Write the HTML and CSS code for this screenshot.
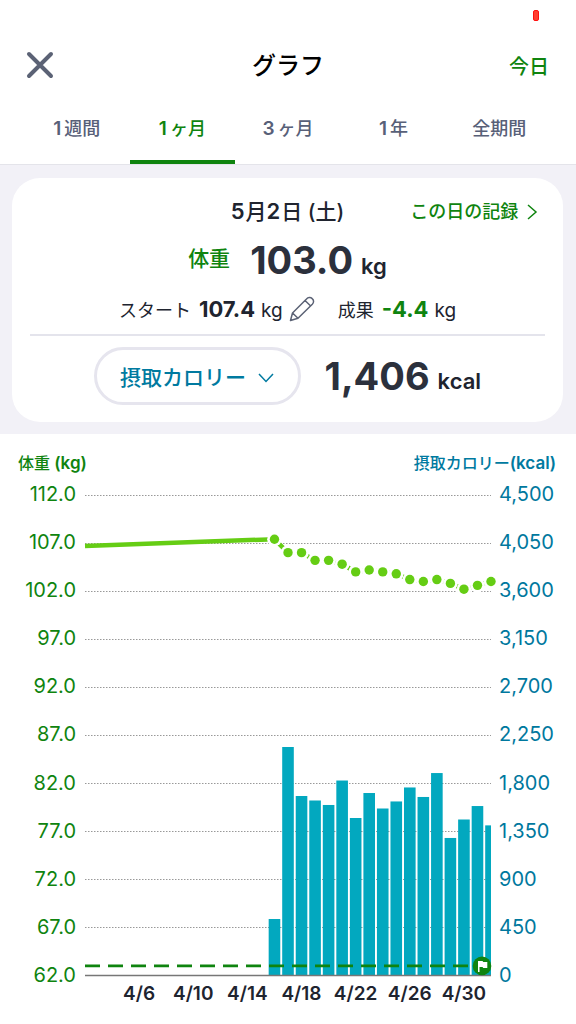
FILE: index.html
```
<!DOCTYPE html>
<html lang="ja">
<head>
    <meta charset="UTF-8">
    <meta name="viewport" content="width=device-width, initial-scale=1.0">
    <title>グラフ</title>
    <link rel="stylesheet" href="styles.css">
</head>
<body>
    <div class="statusbar"><span class="battery"></span></div>
    <header class="header">
        <button class="close" aria-label="閉じる">
            <svg width="26" height="26" viewBox="0 0 26 26"><path d="M2 2L24 24M24 2L2 24"/></svg>
        </button>
        <h1>グラフ</h1>
        <button class="today">今日</button>
    </header>
    <nav class="tabs">
        <button class="tab"><span class="n">1</span>週間</button>
        <button class="tab active"><span class="n">1</span>ヶ月</button>
        <button class="tab"><span class="n">3</span>ヶ月</button>
        <button class="tab"><span class="n">1</span>年</button>
        <button class="tab">全期間</button>
    </nav>

    <section class="summary">
        <div class="card">
            <div class="date-row">
                <h2><b>5</b>月<b>2</b>日 (土)</h2>
                <a class="record" href="#">この日の記録
                    <svg width="10" height="16" viewBox="0 0 10 16"><path d="M1 1L9 8L1 15"/></svg>
                </a>
            </div>
            <div class="weight-row">
                <span class="weight-label">体重</span>
                <span class="big">103.0</span>
                <span class="unit">kg</span>
            </div>
            <div class="start-row">
                <span>スタート</span>
                <span class="num">107.4</span>
                <span class="kg">kg</span>
                <button class="edit" aria-label="編集">
                    <svg width="26" height="26" viewBox="0 0 26 26">
                        <path d="M1.5 24.5L3.5 17L17.5 3C19 1.3 21.5 1 23.2 2.6C25 4.2 25 6.5 23.3 8.3L9 22.3ZM16 4.5L21.7 10M3.5 17L9 22.3"/>
                    </svg>
                </button>
                <span class="result">成果</span>
                <span class="num green">-4.4</span>
                <span class="kg">kg</span>
            </div>
            <div class="kcal-row">
                <button class="picker">摂取カロリー
                    <svg width="16" height="10" viewBox="0 0 16 10"><path d="M1 1L8 8.5L15 1"/></svg>
                </button>
                <span class="big">1,406</span>
                <span class="unit">kcal</span>
            </div>
        </div>
    </section>

    <main>
        <div class="axis-titles">
            <span class="green">体重 <b>(kg)</b></span>
            <span class="blue">摂取カロリー<b>(kcal)</b></span>
        </div>
        <div class="chart">
            <div class="axis left" id="weight-axis"></div>
            <svg class="plot" id="plot" viewBox="0 0 406 481"></svg>
            <div class="axis right" id="kcal-axis"></div>
            <div class="days" id="days"></div>
        </div>
    </main>
    <script src="chart.js"></script>
</body>
</html>
```
FILE: styles.css
```
* {
    box-sizing: border-box;
}
body {
    margin: 0;
    background: #fff;
    color: #20242f;
    font-family: Inter, "Noto Sans CJK JP", sans-serif;
}
button {
    padding: 0;
    border: 0;
    background: none;
    color: inherit;
    font: inherit;
}
h1, h2 {
    margin: 0;
}
svg {
    fill: none;
    overflow: visible;
}
.green {
    color: #0f840f;
}
.blue {
    color: #007aa0;
}
.statusbar {
    display: flex;
    justify-content: flex-end;
    height: 40px;
    padding: 10px 37px;
}
.battery {
    width: 6px;
    height: 11px;
    border: 1px solid #ff1010;
    border-radius: 2px;
    background: #ff4030;
}
.header {
    display: grid;
    grid-template-columns: 1fr auto 1fr;
    align-items: center;
    height: 50px;
    padding: 0 27px;
}
.header h1 {
    padding-bottom: 4px;
    color: #000;
    font-size: 24px;
    font-weight: 500;
}
.close {
    justify-self: start;
    height: 26px;
}
.close svg {
    display: block;
    stroke: #5b6275;
    stroke-width: 4;
    stroke-linecap: round;
}
.today {
    justify-self: end;
    color: #0f840f;
    font-size: 20px;
    font-weight: 500;
}
.tabs {
    display: grid;
    grid-template-columns: repeat(5, 1fr);
    height: 75px;
    padding: 0 24px;
    border-bottom: 1px solid #e4e4ea;
}
.tab {
    padding-top: 4px;
    border-bottom: 4px solid transparent;
    color: #586078;
    font-size: 18px;
    font-weight: 500;
}
.tab .n {
    margin-right: 3px;
    font-size: 19px;
    font-weight: 600;
}
.tab.active {
    border-color: #0f840f;
    color: #0f840f;
}
.summary {
    padding: 13px 13px 12px 12px;
    background: #f2f1f7;
}
.card {
    padding: 17px 18px;
    border-radius: 28px;
    background: #fff;
}
.date-row {
    display: grid;
    grid-template-columns: 1fr auto 1fr;
    align-items: center;
    height: 30px;
}
.date-row h2 {
    grid-column: 2;
    font-size: 21px;
    font-weight: 500;
}
.date-row b {
    margin-right: 1px;
    font-size: 22px;
    font-weight: 600;
}
.record {
    justify-self: end;
    margin-right: 8px;
    color: #0f840f;
    font-size: 18px;
    font-weight: 500;
    text-decoration: none;
    white-space: nowrap;
}
.record svg {
    margin-left: 4px;
    stroke: #0f840f;
    stroke-width: 1.5;
    vertical-align: -2px;
}
.weight-row, .start-row, .kcal-row {
    display: flex;
    align-items: baseline;
    justify-content: center;
}
.weight-row {
    height: 67px;
    line-height: 70px;
}
.weight-label {
    align-self: center;
    margin-right: 20px;
    color: #0f840f;
    font-size: 21px;
    font-weight: 500;
}
.big {
    color: #2b303c;
    font-size: 38px;
    font-weight: 700;
}
.unit {
    margin-left: 8px;
    font-size: 22px;
    font-weight: 600;
}
.start-row {
    height: 44px;
    border-bottom: 2px solid #e4e4ec;
    font-size: 18px;
    line-height: 34px;
}
.num {
    margin: 0 6px 0 8px;
    font-size: 22px;
    font-weight: 700;
}
.kg {
    font-size: 19px;
}
.edit {
    align-self: flex-start;
    height: 34px;
    margin: 0 23px 0 6px;
}
.edit svg {
    display: block;
    stroke: #5b6275;
    stroke-width: 1.5;
    stroke-linejoin: round;
}
.kcal-row {
    align-items: center;
    padding-top: 11px;
}
.picker {
    height: 58px;
    margin-right: 24px;
    padding: 0 24px 0 23px;
    border: 3px solid #e6e5ee;
    border-radius: 29px;
    color: #007aa0;
    font-size: 21px;
    font-weight: 500;
}
.picker svg {
    margin-left: 6px;
    stroke: #007aa0;
    stroke-width: 1.5;
    vertical-align: 2px;
}
.kcal-row .unit {
    padding-top: 9px;
}
.axis-titles {
    display: flex;
    justify-content: space-between;
    padding: 17px 20px 0 18px;
    font-size: 16px;
    font-weight: 500;
    line-height: 24px;
}
.axis-titles b {
    font-size: 17px;
    font-weight: 600;
}
.chart {
    display: grid;
    grid-template-columns: 77px 1fr 77px;
    column-gap: 8px;
    padding-top: 20px;
}
.axis {
    display: flex;
    flex-direction: column;
    justify-content: space-between;
    margin: -11px 0 -9px;
    font-size: 20px;
    line-height: 20px;
}
.left {
    padding-right: 1px;
    color: #0f840f;
    text-align: right;
}
.right {
    color: #00789e;
}
.plot {
    display: block;
    width: 100%;
}
.days {
    grid-column: 2;
    display: grid;
    grid-template-columns: repeat(7, 1fr);
    padding: 6px 0 8px 27px;
    font-size: 19px;
    font-weight: 600;
    line-height: 24px;
    text-align: center;
}
.grid {
    stroke: #999;
    stroke-dasharray: 1.5 1.5;
}
.base {
    stroke: #777;
    stroke-width: 1.5;
}
.bar {
    fill: #02a8bf;
}
.line {
    stroke: #65cd14;
    stroke-width: 4.5;
}
.halo {
    fill: #fff;
}
.dot {
    fill: #65cd14;
}
.goal {
    stroke: #0f840f;
    stroke-width: 2.7;
    stroke-dasharray: 15 8;
}
.goal-mark {
    fill: #0f840f;
}
.flag {
    fill: #fff;
}
```
FILE: chart.js
```
// 4/16 - 5/2
var weights = [107.4, 106, 106, 105.2, 105.2, 104.8, 104, 104.2, 104, 103.8, 103.2, 103, 103.2, 102.8, 102.2, 102.6, 103];
var kcals = [529, 2140, 1681, 1639, 1597, 1826, 1475, 1709, 1564, 1630, 1761, 1672, 1896, 1288, 1461, 1587, 1406];
var days = ["4/6", "4/10", "4/14", "4/18", "4/22", "4/26", "4/30"];

var width = 406, height = 480.5, firstDay = 14;
var step = width / 30;

function weightY(w) { return height - (w - 62) / 50 * height; }
function kcalY(k) { return height - k / 4500 * height; }
function dayX(i) { return (firstDay + i) * step; }

var left = "", right = "", svg = "";
for (var i = 0; i <= 10; i++) {
    left += `<span>${(112 - i * 5).toFixed(1)}</span>`;
    right += `<span>${(4500 - i * 450).toLocaleString("en-US")}</span>`;
    var y = Math.round(i * height / 10) + 0.5;
    if (i < 10) svg += `<path class="grid" d="M0 ${y}H${width}"/>`;
}

kcals.forEach((k, i) => {
    var x = dayX(i) - 5.8;
    var w = Math.min(11.6, width - x);
    svg += `<rect class="bar" x="${x}" y="${kcalY(k)}" width="${w}" height="${height - kcalY(k)}"/>`;
});
svg += `<path class="base" d="M0 ${height}H${width}"/>`;

// weight line
var points = weights.map((w, i) => `${dayX(i)},${weightY(w)}`);
svg += `<polyline class="line" points="0,${weightY(106.7)} ${points.join(" ")}"/>`;
["halo", "dot"].forEach(name => {
    weights.forEach((w, i) => {
        svg += `<circle class="${name}" cx="${dayX(i)}" cy="${weightY(w)}" r="${name == "halo" ? 7.3 : 4.7}"/>`;
    });
});

// goal
var goalY = weightY(63);
svg += `<path class="goal" d="M0 ${goalY}H384"/>
    <circle class="goal-mark" cx="397" cy="${goalY}" r="9.3"/>
    <path class="flag" d="M393 ${goalY - 5}h4.5l.8 1h4v6h-4l-.8-1h-3v5h-1.5z"/>`;

document.getElementById("weight-axis").innerHTML = left;
document.getElementById("kcal-axis").innerHTML = right;
document.getElementById("plot").innerHTML = svg;
document.getElementById("days").innerHTML = days.map(d => `<span>${d}</span>`).join("");
```
